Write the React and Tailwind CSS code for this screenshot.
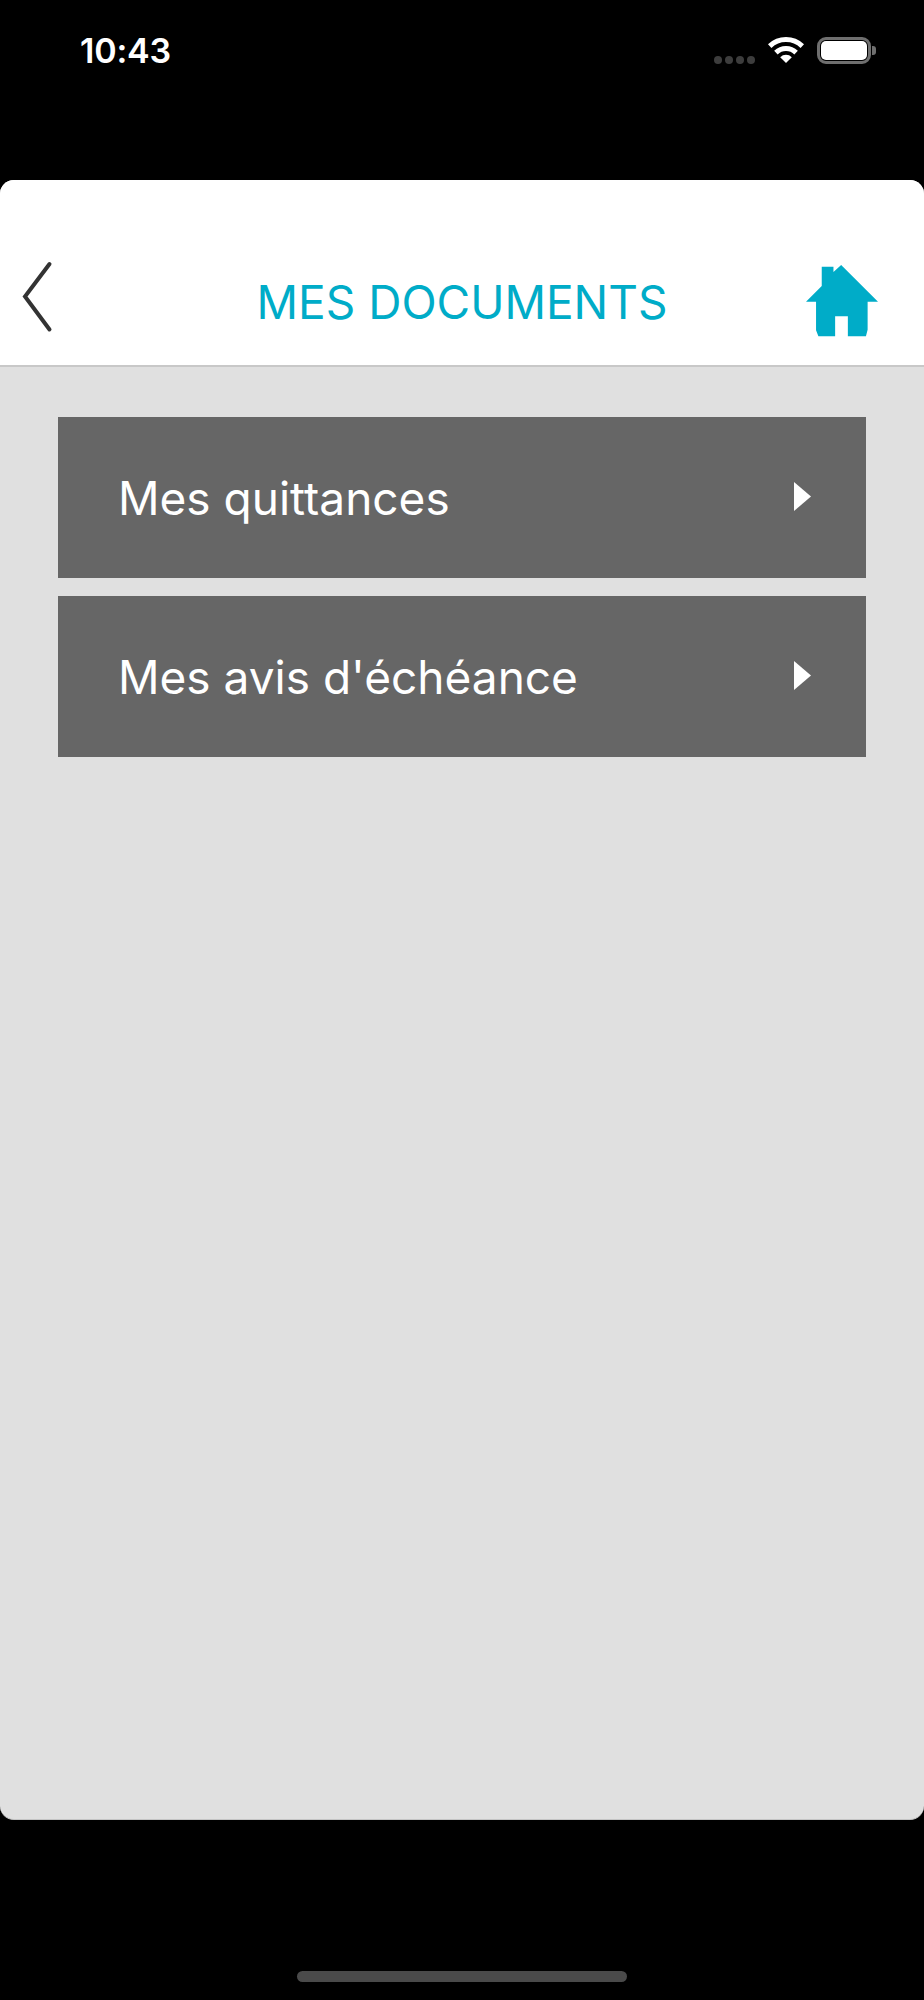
export default function App() {
  const rows = ["Mes quittances", "Mes avis d'échéance"];
  return (
    <div className="w-[924px] h-[2000px] bg-black flex flex-col font-['Inter','Liberation_Sans',sans-serif] overflow-hidden">
      {/* status bar */}
      <div className="h-[180px] shrink-0 pl-[80px] pr-[48px] pt-[30px] flex items-start justify-between">
        <span className="text-white text-[34px] leading-[41px] font-semibold tracking-[-0.2px]">10:43</span>
        <div className="flex items-start pt-[7px]">
          <div className="flex gap-[3px] mt-[19px] mr-[13px]">
            <span className="w-[8px] h-[8px] rounded-full bg-[#3d3d3d]" />
            <span className="w-[8px] h-[8px] rounded-full bg-[#3d3d3d]" />
            <span className="w-[8px] h-[8px] rounded-full bg-[#3d3d3d]" />
            <span className="w-[8px] h-[8px] rounded-full bg-[#3d3d3d]" />
          </div>
          <svg width="36" height="26" viewBox="0 0 36 26" className="mr-[13px]">
            <path d="M1.7 9.1A23.5 23.5 0 0 1 34.3 9.1" fill="none" stroke="#fff" strokeWidth="5" />
            <path d="M7.9 15.6A14.5 14.5 0 0 1 28.1 15.6" fill="none" stroke="#fff" strokeWidth="5" />
            <path d="M18 26L12.2 20.2A8.2 8.2 0 0 1 23.8 20.2Z" fill="#fff" />
          </svg>
          <div className="flex items-center">
            <div className="w-[54px] h-[27px] rounded-[9px] border-[3px] border-[#6f6f6f] p-[1px]">
              <div className="w-full h-full rounded-[5px] bg-white" />
            </div>
            <div className="w-[4px] h-[9px] ml-[1px] rounded-r-[3px] bg-[#6f6f6f]" />
          </div>
        </div>
      </div>

      {/* card */}
      <div className="h-[1640px] shrink-0 rounded-[14px] bg-[#e0e0e0] overflow-hidden flex flex-col border-b border-[#c4c4c4]">
        <div className="h-[187px] shrink-0 bg-white border-b-2 border-[#c8c8c8] grid grid-cols-[1fr_auto_1fr] items-end">
          <div className="pl-[22px] pb-[32px]">
            <svg width="32" height="72" viewBox="0 0 32 72" className="block">
              <path d="M27.5 3L3 35.5L27.5 68.5" fill="none" stroke="#333" strokeWidth="4" strokeLinecap="round" strokeLinejoin="miter" />
            </svg>
          </div>
          <div className="text-[#00acc8] text-[46px] leading-[56px] pb-[35px] whitespace-nowrap">MES DOCUMENTS</div>
          <div className="flex justify-end pr-[46px] pb-[28px]">
            <svg width="72" height="72" viewBox="78 45 215 215" className="block">
              <path
                d="M183 45L293 155L262 155L262 238L257 258L203 258L203 198L165 198L165 258L115 258L108 240L108 155L78 155L125 108L125 50L160 50L160 66Z"
                fill="#00acc8"
              />
            </svg>
          </div>
        </div>

        <div className="flex-1 pt-[50px] px-[58px] flex flex-col gap-[18px]">
          {rows.map((t) => (
            <div
              key={t}
              className="h-[161px] bg-[#666666] pl-[60px] pr-[55px] flex items-center justify-between"
            >
              <span className="text-white text-[46px] leading-[56px] whitespace-nowrap">{t}</span>
              <svg width="17" height="29" viewBox="0 0 17 29" className="block -mt-[3px]">
                <path d="M0 0L17 14.5L0 29Z" fill="#fff" />
              </svg>
            </div>
          ))}
        </div>
      </div>

      {/* home indicator */}
      <div className="flex-1 flex justify-center pt-[151px]">
        <div className="w-[330px] h-[11px] rounded-full bg-[#4a4a4a]" />
      </div>
    </div>
  );
}
